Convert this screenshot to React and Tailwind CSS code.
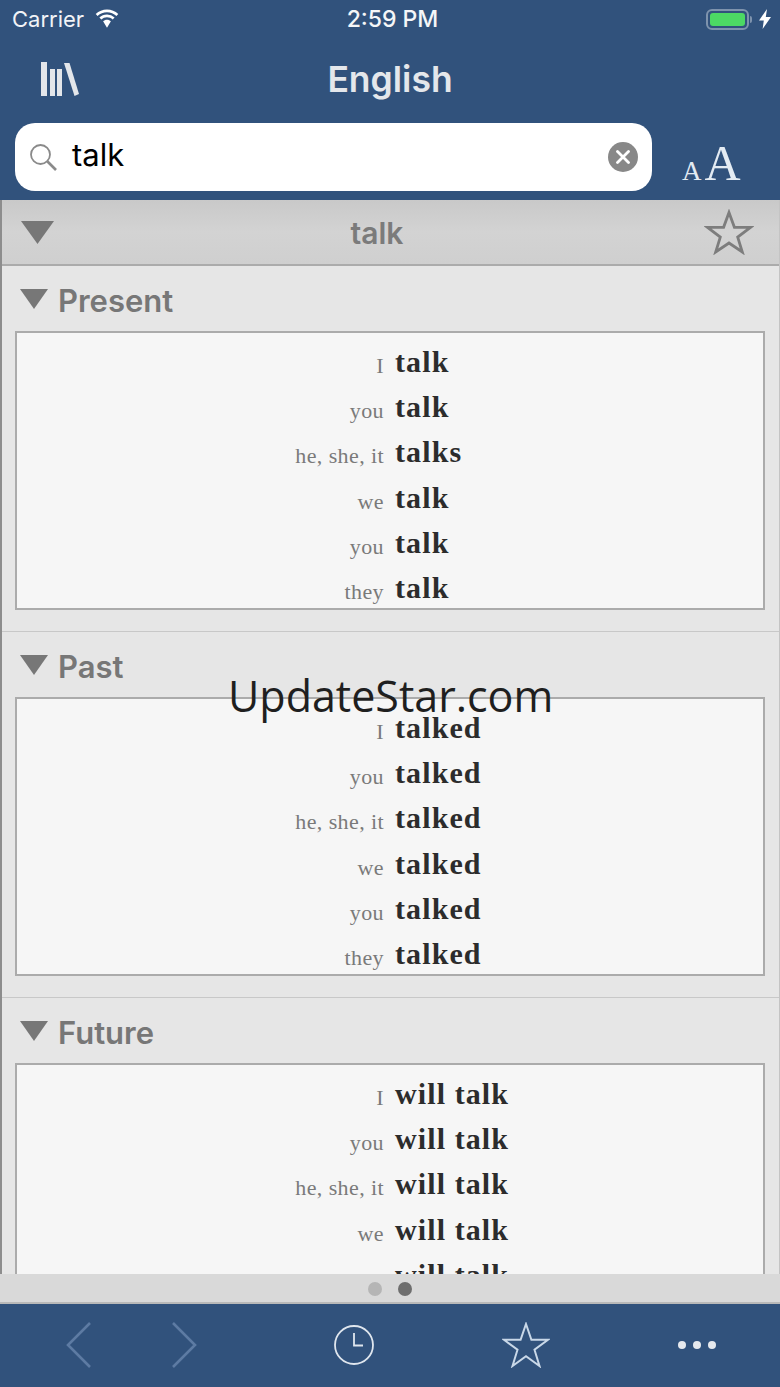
const rows = (forms) => [
  ["I", forms[0]],
  ["you", forms[1]],
  ["he, she, it", forms[2]],
  ["we", forms[3]],
  ["you", forms[4]],
  ["they", forms[5]],
];

function Triangle({ className }) {
  return (
    <svg viewBox="0 0 28 20" className={className} preserveAspectRatio="none">
      <path d="M0 0H28L14 20Z" fill="#777777" />
    </svg>
  );
}

function Section({ title, forms }) {
  return (
    <section className="h-[366px] shrink-0 border-b border-[#c8c8c8] bg-[#e6e6e6] pl-[13px] pr-[14px]">
      <div className="flex h-[65px] items-center gap-[10px] pl-[5px] pt-[4px]">
        <Triangle className="h-[20px] w-[28px] -mt-[4px]" />
        <span className="text-[31px] font-semibold leading-none text-[#777777]">{title}</span>
      </div>
      <div className="h-[279px] border-2 border-[#ababab] bg-[#f6f6f6] pt-[6px]">
        {rows(forms).map(([p, v], i) => (
          <div key={i} className="flex h-[45.2px] items-baseline font-['Liberation_Serif',serif]">
            <span className="w-[367px] translate-y-[1px] text-right text-[22px] tracking-[0.4px] text-[#7a7a7a]">{p}</span>
            <span className="ml-[11px] text-[30px] font-bold tracking-[1.1px] text-[#2c2c2c]">{v}</span>
          </div>
        ))}
      </div>
    </section>
  );
}

export default function App() {
  return (
    <div className="relative flex h-[1387px] w-[780px] flex-col overflow-hidden bg-[#31527c] font-['Inter',sans-serif]">
      <header className="h-[200px] shrink-0">
        <div className="flex h-[38px] items-center justify-between pl-[12px] pr-[9px] text-white">
          <div className="flex w-[250px] items-center gap-[10px]">
            <span className="text-[22px] font-normal text-[#f2f4f7]">Carrier</span>
            <svg viewBox="0 0 26 19" className="-mt-[2px] h-[19px] w-[26px]" fill="white">
              <path d="M13 3.2c3.6 0 6.9 1.4 9.4 3.7l1.9-2A16.4 16.4 0 0 0 13 .4 16.4 16.4 0 0 0 1.700 4.900l1.900 2A13.700 13.700 0 0 1 13 3.200z" />
              <path d="M13 8.300c2.200 0 4.200.8 5.700 2.200l1.900-2A11.100 11.100 0 0 0 13 5.500c-2.900 0-5.600 1.100-7.600 3l1.900 2A8.400 8.400 0 0 1 13 8.300z" />
              <path d="M13 10.700c-1.500 0-2.900.6-3.900 1.500L13 18.800l3.900-6.600c-1-.9-2.400-1.500-3.900-1.500z" />
            </svg>
          </div>
          <span className="ml-[2px] text-[23px] font-medium text-[#f5f6f8]">2:59 PM</span>
          <div className="flex w-[250px] items-center justify-end">
            <div className="h-[21px] w-[43px] rounded-[6px] border-2 border-[#7e93ad] p-[2px]">
              <div className="h-full w-full rounded-[3px] bg-[#4cd964]" />
            </div>
            <span className="ml-[1px] h-[7px] w-[2px] rounded-r-full bg-[#7e93ad]" />
            <svg viewBox="0 0 12 20" className="ml-[7px] h-[20px] w-[12px]" fill="white">
              <path d="M8 0L0 11.500h4.800L3.600 20 12 8H6.800z" />
            </svg>
          </div>
        </div>
        <div className="relative flex h-[85px] items-center justify-center pb-[1px]">
          <svg viewBox="0 0 38 34" className="absolute left-[41px] top-[24px] h-[34px] w-[38px]" fill="#e3e6ea">
            <rect x="0" y="0" width="6" height="34" />
            <rect x="9" y="7" width="5" height="27" />
            <rect x="16" y="7" width="5" height="27" />
            <path d="M23 1h5.500L38 32l-4.500 2z" />
          </svg>
          <span className="text-[35.500px] font-semibold leading-none text-[#e4e7eb]">English</span>
        </div>
        <div className="flex h-[68px] items-start">
          <div className="ml-[15px] flex h-[68px] w-[637px] items-center rounded-[20px] bg-white pl-[15px] pr-[14px]">
            <svg viewBox="0 0 27 27" className="h-[27px] w-[27px]" fill="none" stroke="#8a8a8a">
              <circle cx="10.500" cy="10.500" r="9.500" strokeWidth="1.800" />
              <path d="M17.500 17.500L26 26" strokeWidth="2.600" />
            </svg>
            <span className="ml-[15px] flex-1 pb-[5px] text-[31px] leading-none text-black">talk</span>
            <div className="flex h-[30px] w-[30px] items-center justify-center rounded-full bg-[#888888]">
              <svg viewBox="0 0 14 14" className="h-[14px] w-[14px]" stroke="white" strokeWidth="2.800" strokeLinecap="round">
                <path d="M1.500 1.500L12.500 12.500M12.500 1.500L1.500 12.500" />
              </svg>
            </div>
          </div>
          <div className="ml-[30px] mt-[15px] flex items-baseline gap-[3px] font-['Liberation_Serif',serif] leading-none text-[#e3ebf3]">
            <span className="text-[27px] leading-none">A</span>
            <span className="text-[50px] leading-none">A</span>
          </div>
        </div>
      </header>

      <main className="min-h-0 flex-1 overflow-hidden border-l-2 border-r border-l-[#8d8d8d] border-r-[#c4c4c4] bg-[#e6e6e6]">
        <div className="flex h-[66px] items-center justify-between border-b-2 border-[#ababab] bg-gradient-to-b from-[#c9c9c9] via-[#d3d3d3] to-[#cfcfcf] pl-[19px] pr-[25px]">
          <svg viewBox="0 0 33 23" className="h-[23px] w-[33px]" preserveAspectRatio="none">
            <path d="M0 0H33L16.500 23Z" fill="#777777" />
          </svg>
          <span className="-ml-[4px] pt-[2px] text-[30px] font-semibold leading-none text-[#7b7b7b]">talk</span>
          <svg viewBox="0 0 50 46" className="h-[46px] w-[50px]" fill="none" stroke="#7d7d7d" strokeWidth="2.800">
            <path d="M25 3.500L30.400 18.300H46.500L33.700 28.100L38.300 43L25 34L11.700 43L16.300 28.100L3.500 18.300H19.600Z" />
          </svg>
        </div>
        <Section title="Present" forms={["talk", "talk", "talks", "talk", "talk", "talk"]} />
        <Section title="Past" forms={["talked", "talked", "talked", "talked", "talked", "talked"]} />
        <Section title="Future" forms={["will talk", "will talk", "will talk", "will talk", "will talk", "will talk"]} />
      </main>

      <div className="flex h-[30px] shrink-0 items-center justify-center gap-[16px] border-b-2 border-[#b9b9b9] bg-[#d9d9d9] pt-[2px]">
        <span className="h-[14px] w-[14px] rounded-full bg-[#b5b5b5]" />
        <span className="h-[14px] w-[14px] rounded-full bg-[#6e6e6e]" />
      </div>

      <footer className="relative flex h-[83px] shrink-0 items-center pb-[2px]">
        <svg viewBox="0 0 26 46" className="ml-[66px] h-[46px] w-[26px]" fill="none" stroke="#5d7ba3" strokeWidth="2.600">
          <path d="M24 1L2 23L24 45" />
        </svg>
        <svg viewBox="0 0 26 46" className="ml-[79px] h-[46px] w-[26px]" fill="none" stroke="#5d7ba3" strokeWidth="2.600">
          <path d="M2 1L24 23L2 45" />
        </svg>
        <svg viewBox="0 0 40 40" className="ml-[137px] h-[40px] w-[40px]" fill="none" stroke="#dfe6ee" strokeWidth="1.800">
          <circle cx="20" cy="20" r="19" />
          <path d="M20 8V20.500H29" />
        </svg>
        <svg viewBox="0 0 48 46" className="ml-[128px] h-[46px] w-[48px]" fill="none" stroke="#c9d8e8" strokeWidth="2">
          <path d="M24 2L29.400 17.800H46L32.500 27.700L37.500 44L24 34.300L10.500 44L15.500 27.700L2 17.800H18.600Z" />
        </svg>
        <div className="ml-[128px] flex gap-[7px]">
          <span className="h-[8px] w-[8px] rounded-full bg-[#e6e9ee]" />
          <span className="h-[8px] w-[8px] rounded-full bg-[#e6e9ee]" />
          <span className="h-[8px] w-[8px] rounded-full bg-[#e6e9ee]" />
        </div>
      </footer>

      <div className="absolute left-[228px] top-[666px] font-['Open_Sans',sans-serif] text-[43px] leading-[60px] text-[#1f1f1f]">
        UpdateStar.com
      </div>
    </div>
  );
}
